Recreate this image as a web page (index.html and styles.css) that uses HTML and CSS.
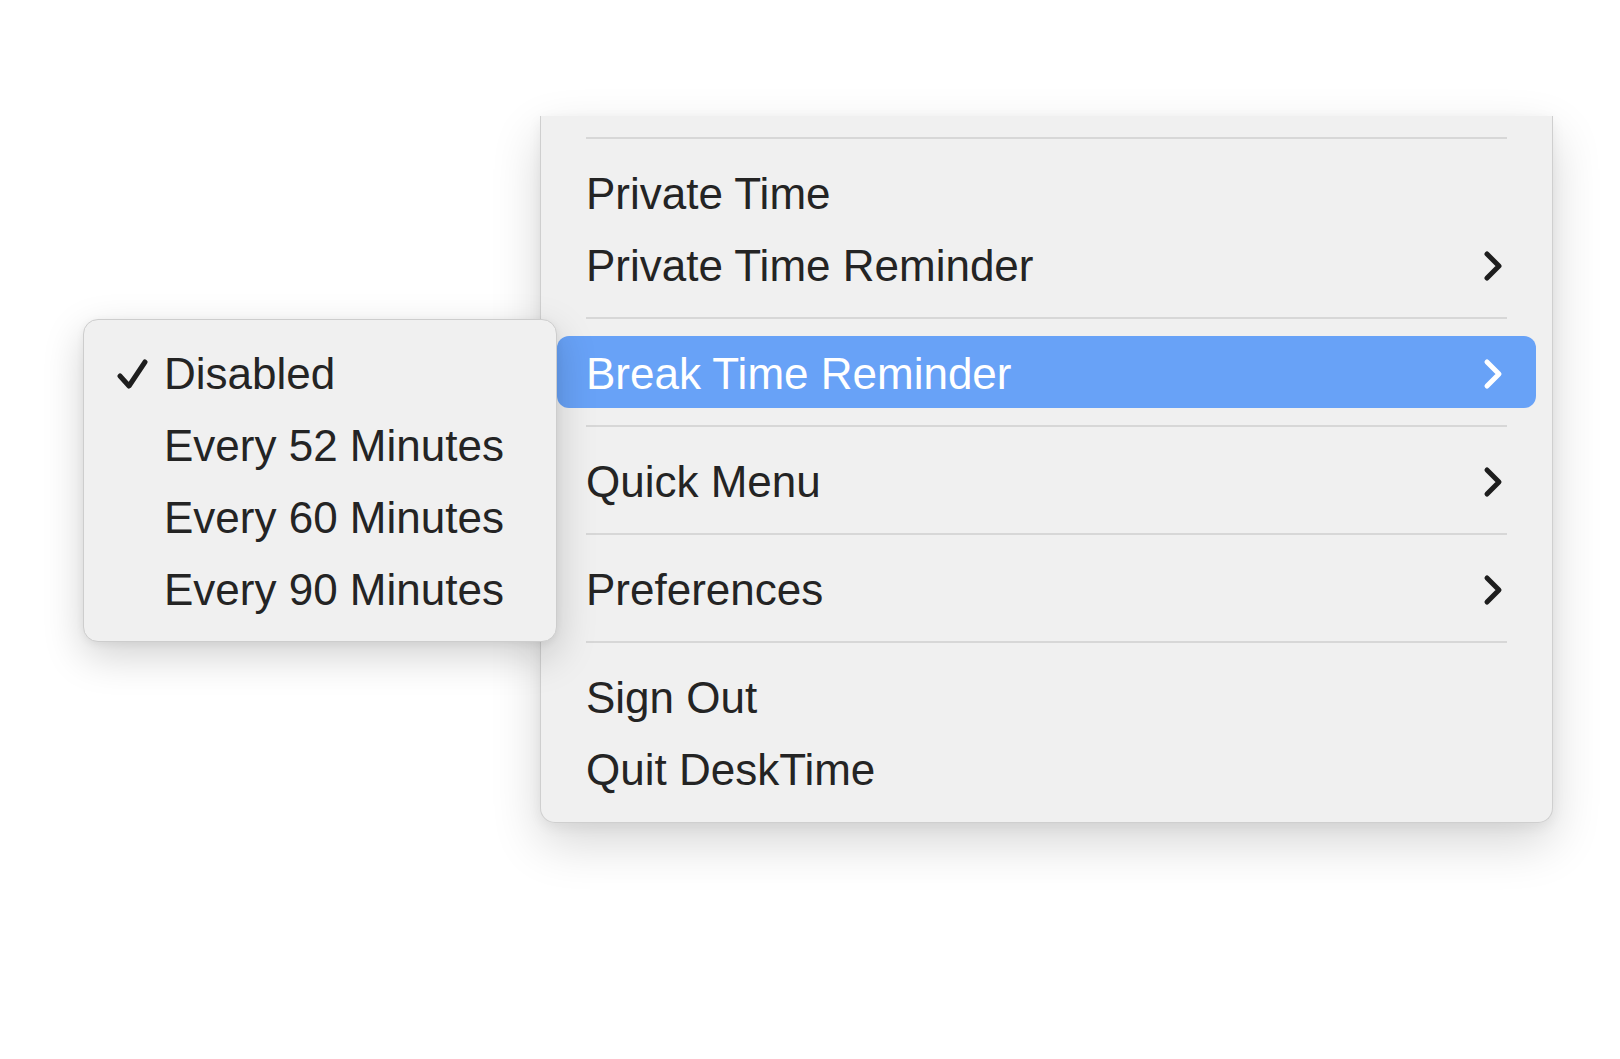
FILE: index.html
```html
<!DOCTYPE html>
<html lang="en">
<head>
    <meta charset="UTF-8">
    <meta name="viewport" content="width=device-width, initial-scale=1.0">
    <title>DeskTime Menu</title>
    <link rel="stylesheet" href="styles.css">
</head>
<body>
    <div class="stage">
        <div class="menu">
            <div class="sep"></div>
            <div class="item">Private Time</div>
            <div class="item">
                <span>Private Time Reminder</span>
                <svg class="chevron" viewBox="0 0 20 32"><path d="M4 4 L16 16 L4 28"/></svg>
            </div>
            <div class="sep"></div>
            <div class="item active">
                <span>Break Time Reminder</span>
                <svg class="chevron" viewBox="0 0 20 32"><path d="M4 4 L16 16 L4 28"/></svg>
            </div>
            <div class="sep"></div>
            <div class="item">
                <span>Quick Menu</span>
                <svg class="chevron" viewBox="0 0 20 32"><path d="M4 4 L16 16 L4 28"/></svg>
            </div>
            <div class="sep"></div>
            <div class="item">
                <span>Preferences</span>
                <svg class="chevron" viewBox="0 0 20 32"><path d="M4 4 L16 16 L4 28"/></svg>
            </div>
            <div class="sep"></div>
            <div class="item">Sign Out</div>
            <div class="item">Quit DeskTime</div>

            <!-- submenu for Break Time Reminder -->
            <div class="submenu">
                <div class="sub-item">
                    <span class="check">
                        <svg viewBox="0 0 32 30"><path d="M4 17 L13 27 L29 3"/></svg>
                    </span>
                    <span>Disabled</span>
                </div>
                <div class="sub-item"><span class="check"></span><span>Every 52 Minutes</span></div>
                <div class="sub-item"><span class="check"></span><span>Every 60 Minutes</span></div>
                <div class="sub-item"><span class="check"></span><span>Every 90 Minutes</span></div>
            </div>
        </div>
    </div>
</body>
</html>
```

FILE: styles.css
```css
body {
    margin: 0;
    background-color: #ffffff;
    font-family: 'Liberation Sans', Arial, sans-serif;
    color: #242424;
}
.stage {
    width: 1620px;
    height: 1059px;
    padding: 116px 0 0 540px;
    box-sizing: border-box;
    overflow: hidden;
}
.menu {
    position: relative;
    width: 1013px;
    box-sizing: border-box;
    padding: 4px 0 18px;
    background-color: #f0f0f0;
    border: 1px solid #cfcfcf;
    border-top: none;
    border-radius: 0 0 15px 15px;
    box-shadow: 0 20px 50px rgba(0,0,0,0.16), 0 4px 14px rgba(0,0,0,0.06);
}
.sep {
    height: 2px;
    margin: 17px 45px;
    background-color: #d7d7d7;
}
.item {
    display: flex;
    justify-content: space-between;
    align-items: center;
    height: 72px;
    box-sizing: border-box;
    margin: 0 16px;
    padding: 4px 33px 0 29px;
    font-size: 44px;
    line-height: 68px;
    border-radius: 12px;
}
.item.active {
    background-color: #68a2f7;
    color: #ffffff;
}
.chevron {
    width: 20px;
    height: 32px;
    fill: none;
    stroke: #1e1e1e;
    stroke-width: 5;
    stroke-linecap: round;
    stroke-linejoin: round;
}
.item.active .chevron {
    stroke: #ffffff;
}
.submenu {
    position: absolute;
    left: -458px;
    top: 203px;
    width: 474px;
    height: 323px;
    box-sizing: border-box;
    padding: 18px 0 15px;
    background-color: #f0f0f0;
    border: 1px solid #cdcdcd;
    border-radius: 15px;
    box-shadow: 0 14px 40px rgba(0,0,0,0.18), 0 2px 8px rgba(0,0,0,0.06);
}
.sub-item {
    display: flex;
    align-items: center;
    height: 72px;
    padding-left: 32px;
    font-size: 44px;
    line-height: 72px;
}
.check {
    display: flex;
    align-items: center;
    width: 48px;
    height: 72px;
}
.check svg {
    width: 32px;
    height: 30px;
    fill: none;
    stroke: #1e1e1e;
    stroke-width: 5;
    stroke-linecap: round;
    stroke-linejoin: round;
}
```
